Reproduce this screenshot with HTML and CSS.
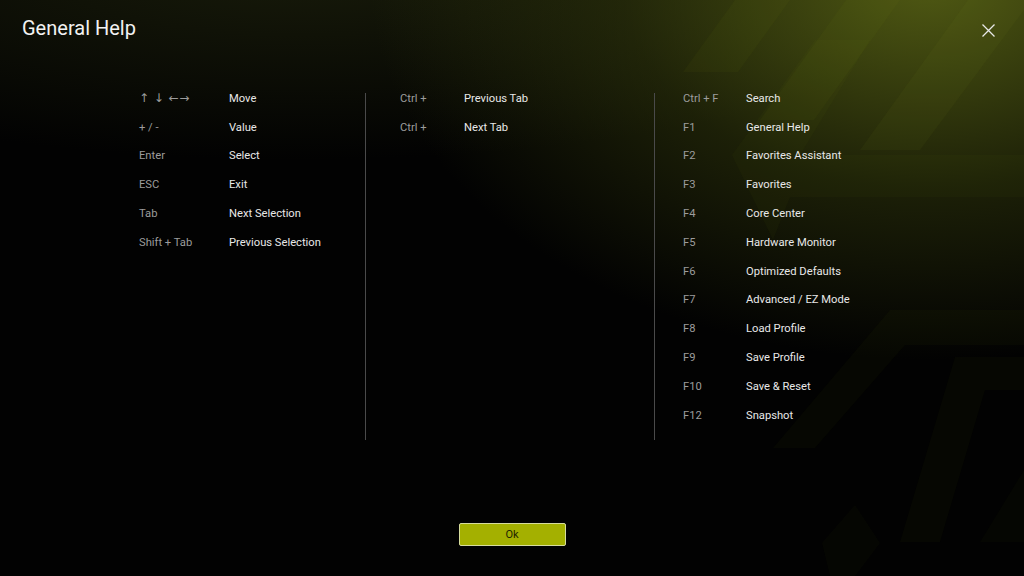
FILE: index.html
```html
<!DOCTYPE html>
<html lang="en">
<head>
    <meta charset="UTF-8">
    <meta name="viewport" content="width=device-width, initial-scale=1.0">
    <title>General Help</title>
    <link rel="stylesheet" href="styles.css">
</head>
<body>

    <div class="page">
        <!-- Background pattern -->
        <svg class="backdrop" viewBox="0 0 1024 576" preserveAspectRatio="none">
            <g fill="#8a9a1a">
                <polygon points="683,72 735,0 790,0 738,72" opacity="0.05"/>
                <polygon points="760,120 846,0 900,0 814,120" opacity="0.05"/>
                <polygon points="860,150 968,0 1024,0 1024,10 920,150" opacity="0.06"/>
                <polygon points="732,155 815,40 870,40 800,155 1024,155 1024,197 790,197 773,240" opacity="0.04"/>
                <polygon points="773,448 890,310 1024,310 1024,345 905,345 815,448" opacity="0.04"/>
                <polygon points="900,542 955,357 1024,357 1024,390 985,390 940,542" opacity="0.04"/>
                <polygon points="822,543 855,505 880,543 855,576 830,576" opacity="0.03"/>
                <polygon points="980,542 1024,470 1024,542" opacity="0.03"/>
            </g>
        </svg>

        <!-- Header -->
        <div class="header">
            <h1>General Help</h1>
            <button class="close-btn" aria-label="Close">
                <svg width="13" height="13" viewBox="0 0 13 13">
                    <path d="M0.5 0.5 L12.5 12.5 M12.5 0.5 L0.5 12.5" stroke="#e8e8e8" stroke-width="1.3" fill="none"/>
                </svg>
            </button>
        </div>

        <!-- Shortcut columns -->
        <div class="help">
            <div class="col col-one">
                <div class="row"><span class="key arrows">↑ ↓ ←→</span><span class="label">Move</span></div>
                <div class="row"><span class="key">+ / -</span><span class="label">Value</span></div>
                <div class="row"><span class="key">Enter</span><span class="label">Select</span></div>
                <div class="row"><span class="key">ESC</span><span class="label">Exit</span></div>
                <div class="row"><span class="key">Tab</span><span class="label">Next Selection</span></div>
                <div class="row"><span class="key">Shift + Tab</span><span class="label">Previous Selection</span></div>
            </div>
            <div class="divider"></div>
            <div class="col col-two">
                <div class="row"><span class="key">Ctrl +</span><span class="label">Previous Tab</span></div>
                <div class="row"><span class="key">Ctrl +</span><span class="label">Next Tab</span></div>
            </div>
            <div class="divider"></div>
            <div class="col col-three">
                <div class="row"><span class="key">Ctrl + F</span><span class="label">Search</span></div>
                <div class="row"><span class="key">F1</span><span class="label">General Help</span></div>
                <div class="row"><span class="key">F2</span><span class="label">Favorites Assistant</span></div>
                <div class="row"><span class="key">F3</span><span class="label">Favorites</span></div>
                <div class="row"><span class="key">F4</span><span class="label">Core Center</span></div>
                <div class="row"><span class="key">F5</span><span class="label">Hardware Monitor</span></div>
                <div class="row"><span class="key">F6</span><span class="label">Optimized Defaults</span></div>
                <div class="row"><span class="key">F7</span><span class="label">Advanced / EZ Mode</span></div>
                <div class="row"><span class="key">F8</span><span class="label">Load Profile</span></div>
                <div class="row"><span class="key">F9</span><span class="label">Save Profile</span></div>
                <div class="row"><span class="key">F10</span><span class="label">Save &amp; Reset</span></div>
                <div class="row"><span class="key">F12</span><span class="label">Snapshot</span></div>
            </div>
        </div>

        <!-- Footer -->
        <div class="footer">
            <button class="ok-btn">Ok</button>
        </div>
    </div>

</body>
</html>
```

FILE: styles.css
```css
body {
    margin: 0;
    padding: 0;
    background-color: #000;
    font-family: Roboto, "Liberation Sans", sans-serif;
}

.page {
    position: relative;
    width: 1024px;
    height: 576px;
    overflow: hidden;
    display: flex;
    flex-direction: column;
    background:
        radial-gradient(ellipse 560px 380px at 930px -20px, rgba(84, 94, 20, 0.95), rgba(60, 68, 14, 0.45) 55%, rgba(0, 0, 0, 0) 100%),
        radial-gradient(ellipse 700px 200px at 300px -40px, rgba(30, 34, 12, 0.8), rgba(0, 0, 0, 0) 100%),
        #020202;
}

.backdrop {
    position: absolute;
    top: 0;
    left: 0;
    width: 1024px;
    height: 576px;
}

/* Header */
.header {
    position: relative;
    display: flex;
    justify-content: space-between;
    align-items: center;
    padding: 16px 29px 0 22px;
    height: 24px;
}

.header h1 {
    margin: 0;
    font-size: 20px;
    line-height: 24px;
    font-weight: 400;
    color: #f2f2f2;
}

.close-btn {
    background: none;
    border: none;
    padding: 0;
    margin-top: 4px;
    width: 13px;
    height: 13px;
    display: flex;
    cursor: pointer;
}

/* Shortcut columns */
.help {
    position: relative;
    display: flex;
    margin-top: 44px;
    padding-left: 139px;
    height: 356px;
}

.col {
    display: flex;
    flex-direction: column;
}

.col-one {
    width: 226px;
}

.col-two {
    width: 254px;
    padding-left: 34px;
}

.col-three {
    padding-left: 28px;
}

.row {
    display: flex;
    align-items: center;
    height: 28.8px;
    font-size: 11.2px;
}

.key {
    color: #9c9c9c;
}

.arrows {
    font-family: "DejaVu Sans", sans-serif;
    font-size: 12px;
    letter-spacing: 0.5px;
}

.col-one .key {
    width: 90px;
}

.col-two .key {
    width: 64px;
}

.col-three .key {
    width: 63px;
}

.label {
    color: #e8e8e8;
}

.divider {
    width: 1px;
    height: 347px;
    margin-top: 9px;
    background-color: #4a4a4a;
}

/* Footer */
.footer {
    position: relative;
    display: flex;
    justify-content: center;
    margin-top: 83px;
}

.ok-btn {
    width: 107px;
    height: 23px;
    font-family: Roboto, "Liberation Sans", sans-serif;
    font-size: 11px;
    color: #222400;
    background-color: #a4b000;
    border: 1px solid #d6dc9e;
    border-radius: 2px;
    cursor: pointer;
}
```
